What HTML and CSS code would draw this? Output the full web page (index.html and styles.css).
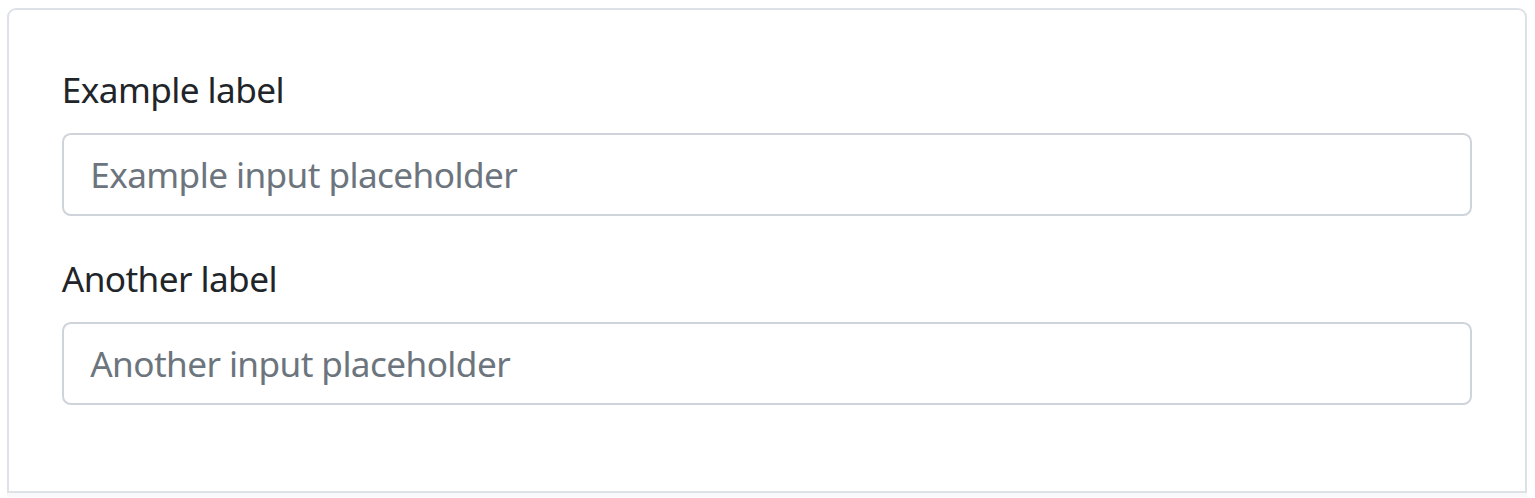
FILE: index.html
```html
<!DOCTYPE html>
<html>
<head>
<meta charset="utf-8">
<link rel="stylesheet" href="styles.css">
</head>
<body>
<div class="example">
  <div class="group">
    <label class="label" for="ex1">Example label</label>
    <input class="control" type="text" id="ex1" placeholder="Example input placeholder">
  </div>
  <div class="group">
    <label class="label" for="ex2">Another label</label>
    <input class="control" type="text" id="ex2" placeholder="Another input placeholder">
  </div>
</div>
<div class="highlight"></div>
</body>
</html>
```
FILE: styles.css
```css
html, body {
  margin: 0;
  padding: 0;
  background: #fff;
}
body {
  padding: 8px 8px 0 7px;
  font-family: "Noto Sans", "Open Sans", sans-serif;
  color: #212529;
  font-size: 35.2px;
  line-height: 1.5;
  letter-spacing: -0.6px;
}
.example {
  border: 2px solid #dee2e6;
  border-radius: 9px 9px 0 0;
  padding: 52.8px 52.8px 50.6px 52.8px;
}
.group {
  margin-bottom: 35.2px;
}
.label {
  display: block;
  margin-bottom: 17.6px;
}
.control {
  display: block;
  box-sizing: border-box;
  width: 100%;
  font: inherit;
  letter-spacing: inherit;
  color: #212529;
  padding: 13.2px 26.4px;
  border: 2px solid #ced4da;
  border-radius: 8.8px;
  background: #fff;
  outline: none;
}
.control::placeholder {
  color: #6c757d;
  opacity: 1;
}
.highlight {
  height: 4px;
  background: #f8f9fa;
}
```
